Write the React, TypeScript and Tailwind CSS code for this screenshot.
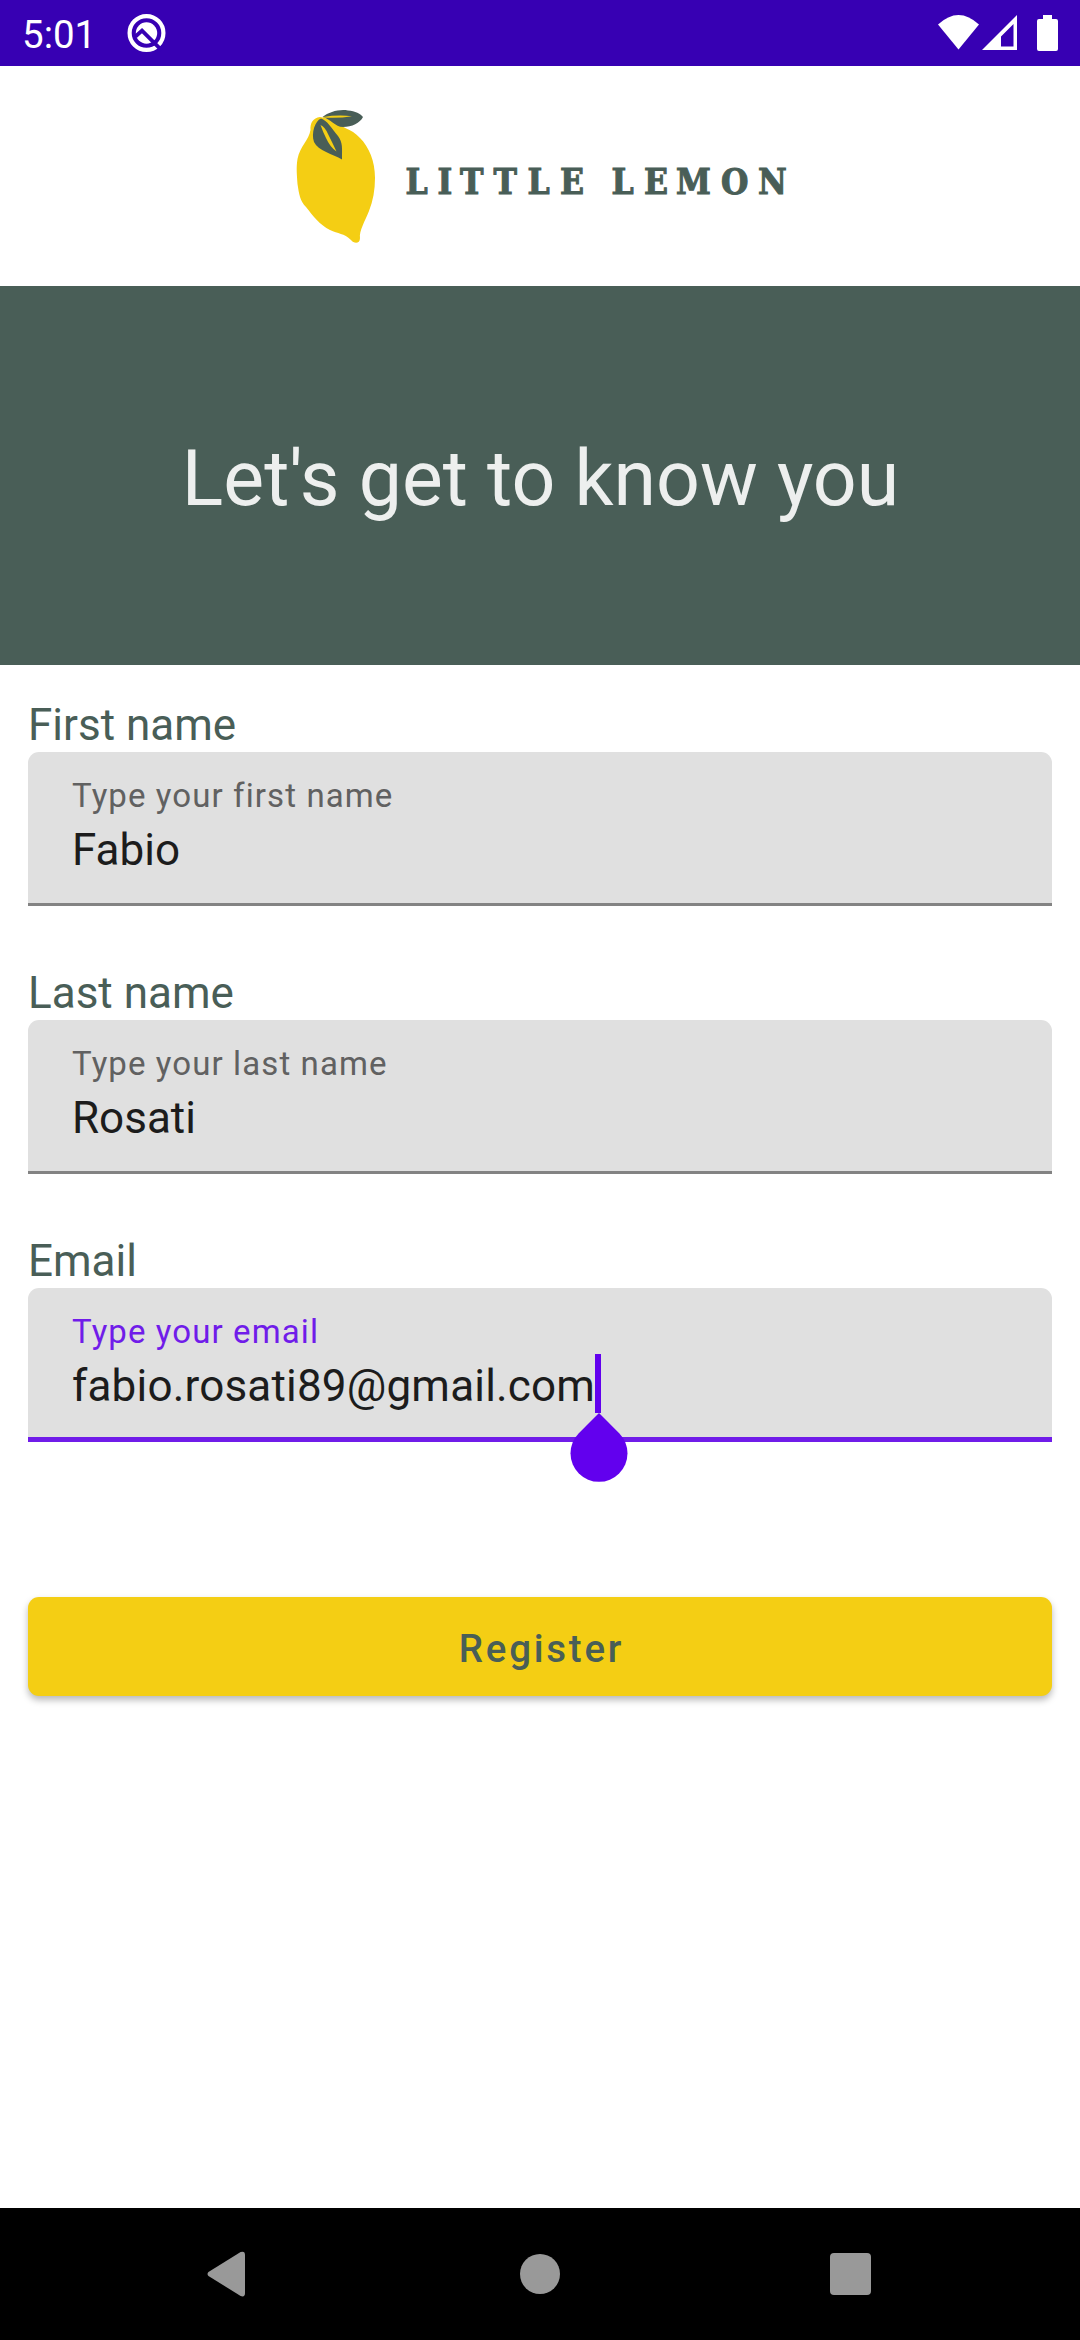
import React from "react";

function StatusBar() {
  return (
    <header className="flex h-[66px] items-center justify-between bg-[#3700b3] pr-[22px] pl-[22px] text-white">
      <div className="flex items-center gap-[34px]">
        <span className="mt-[3px] w-[71px] text-[38.5px] leading-[46px]">5:01</span>
        <svg className="h-[40px] w-[40px]" viewBox="0 0 40 40">
          <circle cx="19.500" cy="20" r="16.900" fill="none" stroke="white" strokeWidth="4.200" />
          <circle cx="19.500" cy="20" r="10.700" fill="white" />
          <path d="M8.500 23.500 L15 17.600 L34.500 37.100" fill="none" stroke="#3700b3" strokeWidth="3.800" />
        </svg>
      </div>
      <svg className="h-[40px] w-[122px]" viewBox="936 13 122 40" fill="white">
        <path d="M938 24.5 Q958.5 5.500 979 24.500 L958.500 49.500 Z" />
        <path fillRule="evenodd" d="M1017 15 V50 H982 Z M1013.500 24 L1001 36.500 V46.500 H1013.500 Z" />
        <path d="M1043 15 H1052 V19 H1056 Q1058 19 1058 21 V49 Q1058 51 1056 51 H1039 Q1037 51 1037 49 V21 Q1037 19 1039 19 H1043 Z" />
      </svg>
    </header>
  );
}

function Logo() {
  return (
    <svg className="h-[220px] w-[520px]" viewBox="280 66 520 220" role="img" aria-label="Little Lemon">
      <path
        fill="#f4ce14"
        d="M320 117 C313 118 310 123 310.500 130 C309 140 300 146 297.500 159 C296 168 297 175 297.500 184 C299 194 300 201 306 207 C313 216 320 225 330 230 C338 234 344 233 351 240 C354 244 360 244 360 238 C359 231 365 221 369 211 C373 201 375 190 375 178 C375 161 369 147 360 138 C351 128 341 128 330 119 Z"
      />
      <path
        fill="#495e57"
        d="M322.500 117 C329 112 339 109 348 110.500 C355 111 361 114 363 117 C360 123 352 127 343 127 C335 127 331 119 322.500 117 Z"
      />
      <path
        fill="#495e57"
        d="M321 118.500 C315 121 311 133 314 142 C318 151 333 154 342 159.500 C342 148 343 143 338 136 C332 129 327 120 321 118.500 Z"
      />
      <path fill="#f4ce14" d="M323 117 Q338 114.500 352 116.200 Q339 118.500 323 117.500 Z" />
      <path fill="#f4ce14" d="M320.500 125 Q325 127 328 134 Q333 144 336.500 151.500 Q330 147 326 138 Q323 132 320.500 125 Z" />
      <text
        x="405.500 437.500 460 493.500 527.500 560 590 611.500 644 676 721 758"
        y="193.500"
        fill="#495e57"
        stroke="#495e57"
        strokeWidth="1"
        className="[font-family:'DejaVu_Serif_Condensed','DejaVu_Serif',serif] text-[35px] font-bold [font-stretch:condensed]"
      >
        LITTLE LEMON
      </text>
    </svg>
  );
}

function Caret() {
  return (
    <span className="relative inline-block h-[59px] w-[5.500px] bg-[#6200ee] align-top">
      <svg className="absolute top-[59px] -left-[25.500px] h-[70px] w-[58px]" viewBox="0 0 58 70" fill="#6200ee">
        <path d="M29 0 L49.200 20.200 A28.500 28.500 0 1 1 8.800 20.200 Z" />
      </svg>
    </span>
  );
}

type FieldProps = { title: string; hint: string; value: string; focused?: boolean };

function Field({ title, hint, value, focused = false }: FieldProps) {
  return (
    <div className="h-[268px]">
      <div className="h-[52px] text-[44px] leading-[50px] text-[#495e57]">{title}</div>
      <div
        className={
          focused
            ? "h-[154px] rounded-t-[11px] border-b-[5.500px] border-[#701ce9] bg-[#e0e0e0] pl-[44px]"
            : "h-[154px] rounded-t-[11px] border-b-[3px] border-[#838383] bg-[#e0e0e0] pl-[44px]"
        }
      >
        <div
          className={
            focused
              ? "pt-[22px] pb-px text-[33px] leading-[43px] tracking-[1.100px] text-[#701ce9]"
              : "pt-[22px] pb-px text-[33px] leading-[43px] tracking-[1.100px] text-[#616161]"
          }
        >
          {hint}
        </div>
        <div className="flex text-[44px] leading-[64px] text-[#1c1c1c]">
          <span className={focused ? "tracking-[0.190px]" : ""}>{value}</span>
          {focused && <Caret />}
        </div>
      </div>
    </div>
  );
}

export default function App() {
  return (
    <div className="flex h-[2340px] w-[1080px] flex-col overflow-hidden bg-white [font-family:Roboto,sans-serif]">
      <StatusBar />
      <div className="flex h-[220px] justify-center">
        <Logo />
      </div>
      <div className="flex h-[379px] items-center justify-center bg-[#495e57] pt-[6px] pl-px text-[77px] leading-[90px] text-[#edefee]">
        Let's get to know you
      </div>
      <main className="flex flex-1 flex-col px-[28px] pt-[35px]">
        <Field title="First name" hint="Type your first name" value="Fabio" />
        <Field title="Last name" hint="Type your last name" value="Rosati" />
        <Field title="Email" hint="Type your email" value="fabio.rosati89@gmail.com" focused />
        <button className="mt-[93px] h-[99px] rounded-[11px] bg-[#f4ce14] pt-[5px] pl-[3px] text-[38.500px] font-medium tracking-[2.750px] text-[#495e57] shadow-[0_4px_7px_rgba(0,0,0,0.28)]">
          Register
        </button>
      </main>
      <nav className="flex h-[132px] items-center justify-center bg-black">
        <svg className="mr-[274px] -ml-[2px] h-[46px] w-[39px]" viewBox="0 0 40 46" preserveAspectRatio="none" fill="#999">
          <path d="M1.500 21 L34.500 1 Q39 -0.500 39 4 V42 Q39 46.500 34.500 45 L1.500 25 Q-0.500 23 1.500 21 Z" />
        </svg>
        <div className="h-[40px] w-[40px] rounded-full bg-[#999]" />
        <div className="ml-[270px] h-[42px] w-[41px] rounded-[4px] bg-[#999]" />
      </nav>
    </div>
  );
}
